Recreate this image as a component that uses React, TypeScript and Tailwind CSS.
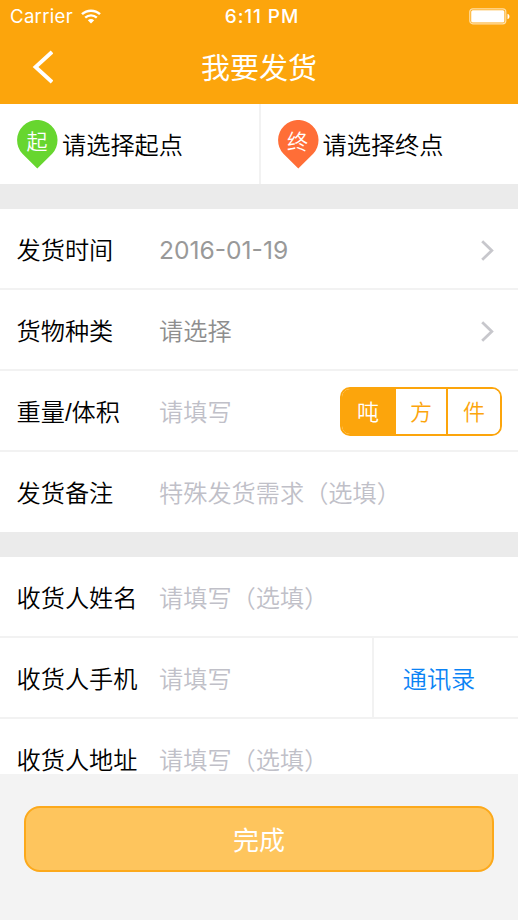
import React, { useState } from "react";

const UNITS = [
  { name: "吨", width: "w-[52px]" },
  { name: "方", width: "w-[52px]" },
  { name: "件", width: "w-[54px]" },
];

const ENDPOINTS = [
  { mark: "起", label: "请选择起点", color: "#67d62f" },
  { mark: "终", label: "请选择终点", color: "#ff6e37" },
];

const StatusBar = () => (
  <div className="grid h-8 grid-cols-3 items-center pr-2 pl-2.5 font-['Inter',sans-serif] leading-none">
    <div className="flex items-center gap-2">
      <span className="text-[18.6px] tracking-[0.3px]">Carrier</span>
      <svg width="20" height="15" viewBox="0 0 20 15" fill="none" stroke="#fff">
        <path d="M1 5.2C6 .5 14 .5 19 5.2" strokeWidth="2.5" />
        <path d="M4.2 8.6C7.5 5.6 12.5 5.6 15.8 8.6" strokeWidth="2.4" />
        <path d="M6.8 11.2c1.9-1.6 4.5-1.6 6.4 0L10 14.4z" fill="#fff" stroke="none" />
      </svg>
    </div>
    <span className="pl-1 text-center text-[19px] font-medium tracking-[0.9px] whitespace-nowrap">6:11 PM</span>
    <svg width="41" height="17" viewBox="0 0 41 17" className="justify-self-end">
      <rect x=".8" y=".8" width="36" height="15" rx="3" fill="none" stroke="#ffe0a8" strokeWidth="1.2" />
      <rect x="2.2" y="2.2" width="33.2" height="12.2" rx="1.5" fill="#fff" />
      <path d="M38.5 5.7c2.6.8 2.6 4.8 0 5.6z" fill="#fff" />
    </svg>
  </div>
);

const Pin = ({ mark, color }: { mark: string; color: string }) => (
  <div className="relative h-[49px] w-[41px] shrink-0">
    <svg width="41" height="49" viewBox="0 0 41 49">
      <path d="M20.3 48.5L5.4 33.8A20.2 20.2 0 1 1 35.2 33.8Z" fill={color} />
    </svg>
    <span className="absolute inset-x-0 top-1.5 pr-px text-center text-[21px] leading-7 text-white">{mark}</span>
  </div>
);

const Chevron = () => (
  <svg width="13" height="21" viewBox="0 0 13 21" fill="none" stroke="#c7c7cc" strokeWidth="2.8" className="mt-[3px] mr-6">
    <path d="M1.2 1.2l9.6 9.3-9.6 9.3" />
  </svg>
);

type RowProps = {
  label: string;
  value: string;
  valueClass?: string;
  last?: boolean;
  children?: React.ReactNode;
};

const Row = ({ label, value, valueClass = "text-[#c0c0c8]", last, children }: RowProps) => (
  <div className={`flex items-center border-b-2 pl-[16.5px] ${last ? "h-20 border-white pt-0.5" : "h-[81px] border-[#f2f2f2]"}`}>
    <span className="w-[142.5px] shrink-0 pt-1 font-['Liberation_Sans','Noto_Sans_CJK_SC',sans-serif] text-black">{label}</span>
    <span className={`flex-1 ${valueClass}`}>{value}</span>
    {children}
  </div>
);

export default function App() {
  const [unit, setUnit] = useState("吨");

  return (
    <div lang="zh-CN" className="flex h-[920px] w-[518px] flex-col overflow-hidden bg-[#ebebeb] font-['Noto_Sans_CJK_SC',sans-serif] text-[24.2px] leading-9 font-[350]">
      {/* Header */}
      <header className="h-[104px] shrink-0 bg-[#fca50c] font-normal text-white">
        <StatusBar />
        <div className="grid h-[72px] grid-cols-[80px_1fr_80px] items-center">
          <button className="flex justify-start pl-[31px]" aria-label="返回">
            <svg width="22" height="34" viewBox="0 0 22 34" fill="none" stroke="#fff" strokeWidth="3.8" className="-mt-0.5">
              <path d="M21 2L4.5 17 21 32" />
            </svg>
          </button>
          <h1 className="-mt-1 text-center text-[29px]">我要发货</h1>
        </div>
      </header>

      <main className="min-h-0 flex-1 overflow-hidden">
        {/* Start / end */}
        <section className="grid h-20 grid-cols-[261px_1fr] bg-white">
          {ENDPOINTS.map((point, index) => (
            <div
              key={point.mark}
              className={`flex items-center ${index === 0 ? "border-r-2 border-[#f2f2f2] pl-[17px]" : "pl-[16.5px]"}`}
            >
              <Pin mark={point.mark} color={point.color} />
              <span className="ml-1">{point.label}</span>
            </div>
          ))}
        </section>

        {/* Goods */}
        <section className="mt-[25px] bg-white">
          <Row
            label="发货时间"
            value="2016-01-19"
            valueClass="mt-[3px] font-['Inter',sans-serif] text-[24.6px] font-normal text-[#999999]"
          >
            <Chevron />
          </Row>
          <Row label="货物种类" value="请选择" valueClass="text-[#8e8e8e]">
            <Chevron />
          </Row>
          <Row label="重量/体积" value="请填写">
            <div className="mt-0.5 mr-4 flex h-[49px] overflow-hidden rounded-[10px] border-2 border-[#fca50c]">
              {UNITS.map((item) => (
                <button
                  key={item.name}
                  onClick={() => setUnit(item.name)}
                  className={`border-[#fca50c] pb-1 text-[22px] not-first:border-l-2 ${item.width} ${
                    unit === item.name ? "bg-[#fca50c] text-white" : "bg-white text-[#fca50c]"
                  }`}
                >
                  {item.name}
                </button>
              ))}
            </div>
          </Row>
          <Row label="发货备注" value="特殊发货需求（选填）" last />
        </section>

        {/* Receiver */}
        <section className="mt-[25px] bg-white">
          <Row label="收货人姓名" value="请填写（选填）" />
          <Row label="收货人手机" value="请填写">
            <button className="h-full w-[146px] border-l-2 border-[#f2f2f2] pr-3.5 text-[#0b83f5]">通讯录</button>
          </Row>
          <Row label="收货人地址" value="请填写（选填）" last />
        </section>
      </main>

      {/* Submit */}
      <footer className="h-[146px] shrink-0 bg-[#f3f3f3] px-6 pt-8">
        <button className="h-[66px] w-full rounded-2xl border-2 border-[#fca91b] bg-[#fec55d] text-[26px] font-normal text-white">
          完成
        </button>
      </footer>
    </div>
  );
}
